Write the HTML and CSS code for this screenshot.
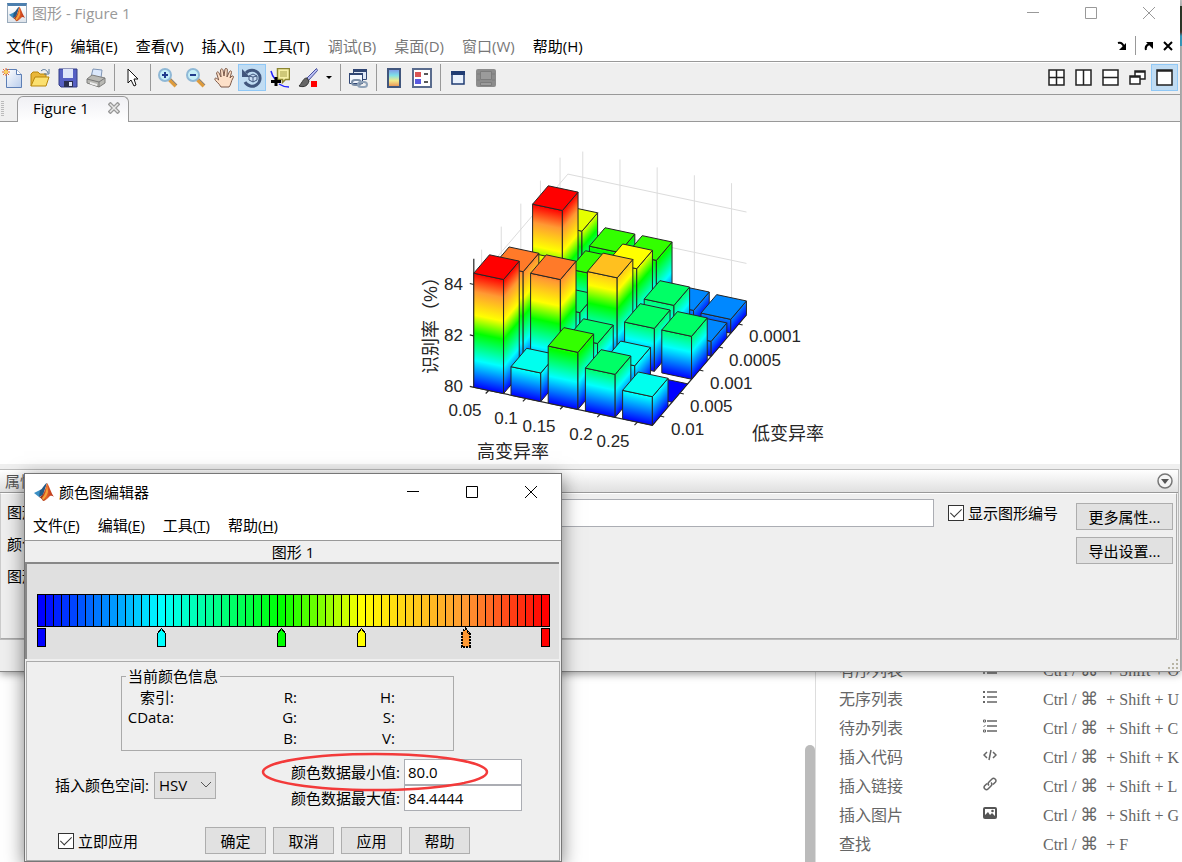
FILE: index.html
```html
<!DOCTYPE html>
<html lang="zh-CN">
<head>
<meta charset="utf-8">
<title>图形 - Figure 1</title>
<link rel="stylesheet" href="styles.css">
</head>
<body>
<svg class="defs" aria-hidden="true">
  <defs>
    <linearGradient id="steel" x1="0" y1="0" x2="1" y2="1"><stop offset="0" stop-color="#fff"/><stop offset="1" stop-color="#b9cdec"/></linearGradient>
    <linearGradient id="flame" x1="0" y1="0" x2="1" y2="0"><stop offset="0" stop-color="#7a1f10"/><stop offset=".5" stop-color="#e4622a"/><stop offset="1" stop-color="#b02a14"/></linearGradient>
    <linearGradient id="jet" x1="0" y1="0" x2="0" y2="1"><stop offset="0" stop-color="#7f8fe8"/><stop offset=".35" stop-color="#7fe0e8"/><stop offset=".65" stop-color="#f2e98a"/><stop offset="1" stop-color="#e88a50"/></linearGradient>
    <symbol id="matlab" viewBox="0 0 20 20">
      <path d="M0 11l6-3 3 3-4 4z" fill="#3b8fc4"/><path d="M6 8c3-1 4-6 7-7l-4 12-4 2z" fill="#245a86"/>
      <path d="M13 1c2 2 4 10 7 14-3-2-4-1-5 0-2 2-4 4-6 4-1-2-2-3-4-4 4 0 6-7 8-14z" fill="url(#flame)"/><path d="M13 2c0 6-2 11-5 14l1 2c2-1 4-5 5-8z" fill="#f6a23a"/>
    </symbol>
  </defs>
</svg>

<main class="notes">
  <div class="editor"></div>
  <div class="scroll"><div class="thumb"></div></div>
  <aside class="help">
    <table>
      <tr><td>有序列表</td><td><svg width="14" height="14" viewBox="0 0 14 14"><path d="M4 2h10M4 7h10M4 12h10M1 1v2M1 6v2M1 11v2" class="ln"/></svg></td><td>Ctrl / <span class="cmd">⌘</span> + Shift + O</td></tr>
      <tr><td>无序列表</td><td><svg width="14" height="14" viewBox="0 0 14 14"><path d="M4 2h10M4 7h10M4 12h10" class="ln"/><path d="M0 1h2v2H0zM0 6h2v2H0zM0 11h2v2H0z" fill="#666"/></svg></td><td>Ctrl / <span class="cmd">⌘</span> + Shift + U</td></tr>
      <tr><td>待办列表</td><td><svg width="14" height="14" viewBox="0 0 14 14"><path d="M4 2h10M4 7h10M4 12h10" class="ln"/><path d="M.5 1h2v2h-2zM.5 11h2v2h-2zM.5 8l2-2" class="ln thin"/></svg></td><td>Ctrl / <span class="cmd">⌘</span> + Shift + C</td></tr>
      <tr><td>插入代码</td><td><svg width="14" height="14" viewBox="0 0 14 14"><path d="M4 4L1 7l3 3M10 4l3 3-3 3M8 2L6 12" class="ln"/></svg></td><td>Ctrl / <span class="cmd">⌘</span> + Shift + K</td></tr>
      <tr><td>插入链接</td><td><svg width="14" height="14" viewBox="0 0 14 14"><path d="M6 8.500C4.500 7 5 6 6 5l3-3c2-2 5 1 3.500 3L10 7.500M8 5.500c1.500 1.500 1 2.500 0 3.500l-3 3c-2 2-5-1-3.500-3L4 6.500" class="ln"/></svg></td><td>Ctrl / <span class="cmd">⌘</span> + Shift + L</td></tr>
      <tr><td>插入图片</td><td><svg width="14" height="14" viewBox="0 0 14 14"><rect y="1" width="14" height="12" rx="2" fill="#555"/><path d="M2 3h10v7l-3-3-2 2-2-3-3 3z" fill="#fff"/><circle cx="9.500" cy="5" r="1.300" fill="#555"/></svg></td><td>Ctrl / <span class="cmd">⌘</span> + Shift + G</td></tr>
      <tr><td>查找</td><td></td><td>Ctrl / <span class="cmd">⌘</span> + F</td></tr>
    </table>
  </aside>
</main>
<div class="edge"><div class="edge-photo"></div></div>

<section class="figure-window">
  <header class="titlebar">
    <span class="app-icon"><svg width="16" height="16"><use href="#matlab"/></svg></span>
    <h1>图形 - Figure 1</h1>
    <div class="winbtns">
      <button aria-label="最小化"><svg width="12" height="12"><path d="M0 5.500h12" /></svg></button>
      <button aria-label="最大化"><svg width="12" height="12"><path d="M.5.5h11v11H.5z"/></svg></button>
      <button aria-label="关闭"><svg width="12" height="12"><path d="M0 0l12 12M12 0L0 12"/></svg></button>
    </div>
  </header>
  <nav class="menubar">
    <button>文件(F)</button><button>编辑(E)</button><button>查看(V)</button><button>插入(I)</button><button>工具(T)</button><button disabled>调试(B)</button><button disabled>桌面(D)</button><button disabled>窗口(W)</button><button>帮助(H)</button>
    <div class="dockbtns">
      <button aria-label="停靠"><svg width="10" height="10"><path d="M1 2c3-1 5 1 6 4" fill="none" stroke="#000" stroke-width="2"/><path d="M9 2v7H2z"/></svg></button>
      <i></i>
      <button aria-label="取消停靠"><svg width="10" height="10"><path d="M2 9c-1-3 1-5 3-6" fill="none" stroke="#000" stroke-width="2"/><path d="M2 1h7v7z"/></svg></button>
      <button aria-label="关闭图形"><svg width="10" height="10"><path d="M1 1l8 8M9 1L1 9" fill="none" stroke="#000" stroke-width="2"/></svg></button>
    </div>
  </nav>
  <div class="toolbar">
    <div class="tools">
      <button aria-label="新建"><svg width="20" height="20"><path d="M4.500 1.500h10l5 5v13h-15z" fill="url(#steel)" stroke="#5d7fb5"/><path d="M14.500 1.500v5h5" fill="#fff" stroke="#5d7fb5"/><path d="M4 0v8M0 4h8M1 1l6 6M7 1L1 7" stroke="#e2662f"/><circle cx="4" cy="4" r="2" fill="#fbd35a"/></svg></button>
      <button aria-label="打开"><svg width="20" height="20"><path d="M1 18V6l2-2h5l2 2h6v3" fill="#e9b73a" stroke="#b8860b"/><path d="M1 18L5 9h14l-3 9z" fill="#fbe070" stroke="#b8860b"/><path d="M11 3c3-3 6-1 7 2M19 1v5h-5" fill="none" stroke="#5c7a9a"/></svg></button>
      <button aria-label="保存"><svg width="20" height="20"><path d="M1 1h18v18H3l-2-2z" fill="#5660c4" stroke="#333c86"/><path d="M5 1h10v9H5z" fill="#dfe6fa"/><path d="M6 13h9v6H6z" fill="#2b2f4e"/><path d="M11 14h3v4h-3z" fill="#dfe6fa"/></svg></button>
      <button aria-label="打印"><svg width="20" height="20"><path d="M5 9l2-8 9 1-1 8z" fill="#dbe8fb" stroke="#7f95b5"/><path d="M1 11l5-4 13 3v5l-6 4-12-4z" fill="#b9b9b4" stroke="#7f7f7d"/><path d="M1 11l12 3 6-4M13 14v5" fill="none" stroke="#777"/><path d="M4 14l7 2v2l-7-2z" fill="#eee"/></svg></button>
      <i></i>
      <button aria-label="选择"><svg width="20" height="20"><path d="M6 1v14l3-3 3 6 2-1-2-6h4z" fill="#fff" stroke="#111"/></svg></button>
      <i></i>
      <button aria-label="放大"><svg width="20" height="20"><path d="M11 11l7 7" stroke="#dd9b3c" stroke-width="4"/><path d="M12 10l7 7" stroke="#7f838e"/><circle cx="7" cy="7" r="6" fill="#c5eef7" stroke="#8fb8d6" stroke-width="2"/><path d="M4 7h6M7 4v6" stroke="#203b8c" stroke-width="2"/></svg></button>
      <button aria-label="缩小"><svg width="20" height="20"><path d="M11 11l7 7" stroke="#dd9b3c" stroke-width="4"/><path d="M12 10l7 7" stroke="#7f838e"/><circle cx="7" cy="7" r="6" fill="#c5eef7" stroke="#8fb8d6" stroke-width="2"/><path d="M4 7h6" stroke="#203b8c" stroke-width="2"/></svg></button>
      <button aria-label="平移"><svg width="20" height="20"><path d="M7 19C5 15 1 13 .7 11c.5-2 3 0 4 1L2.500 5c1-2 2-1 2.500 0l2 4L6.500 2c1-2 2-1 2.500 0l1 6 1-7c1-1.500 2.500-.5 2.300 1L13 9l2.500-5.500c1-1.500 2.500 0 2 1L16 10l2-2c1.500-.5 2 1 1 2-2 3-2 7-4 9z" fill="#fde0c8" stroke="#7c5948"/></svg></button>
      <button class="on" aria-label="三维旋转"><svg width="20" height="20"><path d="M4 5a8 8 0 1 1-1 9" fill="none" stroke="#41567d" stroke-width="3"/><path d="M0 1v8h8z" fill="#41567d"/><path d="M7 8l4-2 4 2v4l-4 2-4-2zM7 8l4 1 4-1M11 9v5" fill="#c9dcf3" stroke="#41567d"/></svg></button>
      <button aria-label="数据游标"><svg width="20" height="20"><path d="M1 3c1 4 2 6 4 8M9 16c3 2 6 3 10 3" fill="none" stroke="#22f" stroke-width="1.500"/><path d="M7.500.5h12v11h-4l-3 3v-3h-5z" fill="#f6f0a6" stroke="#8b8532" stroke-width="1.500"/><path d="M10 4h7M10 6h7M10 8h7" stroke="#a59f4b"/><path d="M6 9v9M1 13.500h10" stroke="#000" stroke-width="3"/></svg></button>
      <button aria-label="刷亮"><svg width="20" height="20"><path d="M18.500.5l1 2-9 10-2-2z" fill="#b9bff2" stroke="#474f9d"/><path d="M9 10c-4 0-4 4-8 8 6 2 9-1 10-5z" fill="#666" stroke="#333"/><path d="M13 13h6v6h-6z" fill="#f00"/></svg></button>
      <button class="drop" aria-label="刷亮选项"><svg width="6" height="3"><path d="M0 0h6L3 3z"/></svg></button>
      <i></i>
      <button aria-label="链接绘图"><svg width="20" height="20"><path d="M5.500 1.500h13v10h-13z" fill="#dfe8f7" stroke="#304674"/><path d="M5 1h14v3H5z" fill="#304674"/><path d="M1.500 5.500h13v10h-13z" fill="#f3f7fe" stroke="#304674"/><path d="M1 5h14v2H1z" fill="#304674"/><rect x="4" y="12" width="9" height="5" rx="3" fill="none" stroke="#7b8ea6" stroke-width="2"/><rect x="10" y="14" width="9" height="5" rx="3" fill="none" stroke="#8fa2b8" stroke-width="2"/></svg></button>
      <i></i>
      <button aria-label="颜色栏"><svg width="20" height="20"><path d="M4 1h12v18H4z" fill="url(#jet)" stroke="#41567d" stroke-width="2"/></svg></button>
      <button aria-label="图例"><svg width="20" height="20"><path d="M1 1h18v18H1z" fill="#fff" stroke="#5a6c8e" stroke-width="2"/><path d="M3 4h6v5H3z" fill="#d95454"/><path d="M3 11h6v5H3z" fill="#5a5ae0"/><path d="M12 6h4M12 14h4" stroke="#222" stroke-width="1.500"/></svg></button>
      <i></i>
      <button aria-label="隐藏绘图工具"><svg width="14" height="14"><path d="M1 1h12v12H1z" fill="#e9f1fc" stroke="#203c73" stroke-width="1.500"/><path d="M0 0h14v4H0z" fill="#203c73"/></svg></button>
      <button aria-label="显示绘图工具" disabled><svg width="20" height="20"><rect x="0" y="1" width="20" height="18" rx="2" fill="#8c8c8c"/><path d="M4.500 3.500h11v8h-11zM4.500 14.500h11v3h-11zM1 6h3M16 6h3M1 12h3M16 12h3" fill="#9b9b9b" stroke="#7c7c7c"/></svg></button>
    </div>
    <div class="layouts">
      <button aria-label="平铺"><svg width="17" height="17"><path d="M1 1h15v15H1zM8.500 1v15M1 8.500h15"/></svg></button>
      <button aria-label="左右平铺"><svg width="17" height="17"><path d="M1 1h15v15H1zM8.500 1v15"/></svg></button>
      <button aria-label="上下平铺"><svg width="17" height="17"><path d="M1 1h15v15H1zM1 8.500h15"/></svg></button>
      <button aria-label="浮动"><svg width="17" height="17"><path d="M6 2h10v8H6zM6 3h10"/><path d="M1 7h10v8H1zM1 8h10"/></svg></button>
      <button class="on" aria-label="最大化"><svg width="17" height="17"><path d="M1 1h15v15H1zM1 2h15"/></svg></button>
    </div>
  </div>
  <div class="tabs">
    <span class="grip"></span>
    <div class="tab"><span>Figure 1</span><button aria-label="关闭标签"><svg width="12" height="12"><path d="M1 1l10 10M11 1L1 11" stroke="#999" stroke-width="4"/><path d="M2 2l8 8M10 2l-8 8" stroke="#e8e8e8" stroke-width="1.500"/></svg></button></div>
    <span class="tabfill"></span>
  </div>
  <svg id="plot" class="plot" viewBox="0 122 1180 342" role="img" aria-label="识别率三维柱状图">
    <defs><linearGradient id="cmap" gradientUnits="userSpaceOnUse" x1="0" y1="0" x2="0" y2="-114"></linearGradient></defs>
  </svg>
  <section class="props">
    <header><h2>属性</h2><button aria-label="折叠"><svg width="16" height="16"><circle cx="8" cy="8" r="7" fill="#f5f5f5" stroke="#777" stroke-width="1.500"/><path d="M4 6h8l-4 5z" fill="#555"/></svg></button></header>
    <div class="prop-body">
      <div class="prop-fields">
        <div class="prop-row"><label class="cut" for="fname">图形</label><input id="fname" type="text"><label class="check"><input type="checkbox" checked>显示图形编号</label></div>
        <div class="prop-row"><span class="cut">颜色</span></div>
        <div class="prop-row"><span class="cut">图形</span></div>
      </div>
      <div class="prop-buttons"><button class="push">更多属性...</button><button class="push">导出设置...</button></div>
    </div>
  </section>
  <footer class="status"><svg width="12" height="12"><path d="M9 0h2v2H9zM5 4h2v2H5zM9 4h2v2H9zM1 8h2v2H1zM5 8h2v2H5zM9 8h2v2H9z" fill="#b8b4a4"/></svg></footer>
</section>

<section class="dialog">
  <header class="titlebar">
    <svg width="20" height="20"><use href="#matlab"/></svg>
    <h1>颜色图编辑器</h1>
    <div class="winbtns">
      <button aria-label="最小化"><svg width="12" height="12"><path d="M0 5.500h12"/></svg></button>
      <button aria-label="最大化"><svg width="12" height="12"><path d="M.5.5h11v11H.5z"/></svg></button>
      <button aria-label="关闭"><svg width="12" height="12"><path d="M0 0l12 12M12 0L0 12"/></svg></button>
    </div>
  </header>
  <nav class="menubar"><button>文件(<u>F</u>)</button><button>编辑(<u>E</u>)</button><button>工具(<u>T</u>)</button><button>帮助(<u>H</u>)</button></nav>
  <div class="caption">图形 1</div>
  <div class="mapbox"><svg id="bar" viewBox="0 0 514 56" shape-rendering="crispEdges"></svg></div>
  <div class="settings">
    <fieldset class="info">
      <legend>当前颜色信息</legend>
      <span>索引:</span><span>R:</span><span>H:</span>
      <span>CData:</span><span>G:</span><span>S:</span>
      <span></span><span>B:</span><span>V:</span>
    </fieldset>
    <div class="ranges">
      <div class="space"><label for="space">插入颜色空间:</label><span class="selwrap"><select id="space"><option>HSV</option></select><svg width="10" height="6"><path d="M0 0l5 5 5-5" fill="none" stroke="#555"/></svg></span></div>
      <div class="limits">
        <label for="cmin">颜色数据最小值:</label><input id="cmin" type="text" value="80.0">
        <label for="cmax">颜色数据最大值:</label><input id="cmax" type="text" value="84.4444">
        <svg class="ring" width="228" height="40"><ellipse cx="114" cy="20" rx="112" ry="18"/></svg>
      </div>
    </div>
    <div class="actions">
      <label class="check"><input type="checkbox" checked>立即应用</label>
      <div class="pushes"><button class="push">确定</button><button class="push">取消</button><button class="push">应用</button><button class="push">帮助</button></div>
    </div>
  </div>
</section>
<script src="chart.js"></script>
</body>
</html>
```

FILE: styles.css
```css
* { box-sizing: border-box; }
body {
  margin: 0; height: 100vh; overflow: hidden; position: relative; background: #fff; color: #000;
  font: 15px/20px "Open Sans", "Noto Sans CJK SC", sans-serif;
}
button, input, select { font: inherit; color: inherit; }
button { padding: 0; border: 0; background: none; }
h1, h2 { margin: 0; font: inherit; }
.defs { position: absolute; width: 0; height: 0; }

.notes { display: grid; grid-template-columns: 1fr 10px 367px; height: 100%; }
.scroll { padding-top: 745px; height: 100%; overflow: hidden; }
.thumb { height: 100%; background: #bbb; border-radius: 5px 5px 0 0; }
.help { border-left: 1px solid #ddd; padding: 656px 0 0 23px; overflow: hidden; color: #666; font: 16px/29px "Liberation Serif", "Noto Sans CJK SC", serif; }
.help table { border-collapse: collapse; white-space: nowrap; }
.help tr { height: 29px; }
.help td { padding: 0; height: 29px; }
.help td:first-child { width: 144px; }
.help td:nth-child(2) { width: 60px; line-height: 0; padding-bottom: 6px; }
.help .ln { fill: none; stroke: #666; stroke-width: 1.5; }
.help .thin { stroke-width: 1; }
.cmd { font-family: "DejaVu Sans", sans-serif; font-size: 18px; line-height: 20px; margin-right: 4px; }
.edge { position: absolute; top: 0; right: 0; width: 2px; height: 671px; background: #c8c8c8; }
.edge-photo { margin-top: 6px; height: 40px; background: linear-gradient(#33402f 60%, #5b3a2d 65%, #3fb0d8 75%); }

.figure-window { position: absolute; top: 0; left: 0; right: 2px; background: #efefef; border-bottom: 1px solid #888; box-shadow: 0 2px 8px rgba(0,0,0,.4); }
.titlebar { display: flex; align-items: center; background: #fff; }
.winbtns { margin-left: auto; display: flex; }
.winbtns button { display: grid; place-items: center; }
.winbtns path { fill: none; stroke: currentColor; }
.figure-window .titlebar { height: 30px; padding: 0 2px 4px 7px; gap: 5px; color: #999; }
.figure-window .winbtns button { width: 58px; }
.app-icon { display: grid; place-items: center; width: 20px; height: 20px; border: 1px solid #9ab; border-top: 3px solid #4c7fae; background: linear-gradient(#fff, #dde3ea); }
.menubar { display: flex; align-items: center; gap: 18px; background: #fff; white-space: nowrap; }
.figure-window .menubar { height: 32px; padding: 0 6px; border-bottom: 1px solid #999; }
.menubar button:disabled { color: #777; }
.dockbtns { margin-left: auto; display: flex; align-items: center; gap: 7px; }
.dockbtns button { height: 20px; display: grid; place-items: center; width: 12px; }
.dockbtns i { width: 1px; height: 19px; background: #999; }
.toolbar { display: flex; justify-content: space-between; height: 33px; padding-top: 1px; border-top: 1px solid #fff; border-bottom: 1px solid #999; }
.tools, .layouts { display: flex; height: 27px; }
.tools { margin-left: -2px; }
.tools button { width: 28px; display: grid; place-items: center; }
.tools .drop { width: 14px; }
.tools i { width: 8px; background: linear-gradient(#999, #999) center / 1px 100% no-repeat; }
.layouts { padding-right: 2px; }
.layouts button { width: 27px; display: grid; place-items: center; }
.layouts path { fill: #fff; stroke: #222; stroke-width: 1.5; }
.toolbar .on { background: #c0dcf3; border: 1px solid #90c8f6; }
.tabs { display: flex; height: 27px; }
.tabs .grip { width: 17px; border-bottom: 1px solid #999; background: repeating-linear-gradient(#bbb 0 1px, transparent 1px 2px) 1px 6px / 3px 16px no-repeat; }
.tab { display: flex; align-items: center; gap: 19px; width: 112px; margin-top: 1px; padding: 0 8px 3px 15px; border: 1px solid #999; border-bottom: 0; border-radius: 6px 6px 0 0; background: linear-gradient(#f0f0f4, #fff); white-space: nowrap; }
.tab button { line-height: 0; }
.tabfill { flex: 1; border-bottom: 1px solid #999; }
.plot { display: block; width: 100%; background: #fff; }
.plot text { font: 17px "Liberation Sans", "Noto Sans CJK SC", sans-serif; fill: #262626; }
.plot .axis { font-size: 18px; }
.plot .grid { fill: none; stroke: #dcdcdc; }
.plot .rule { fill: none; stroke: #262626; stroke-width: 1.2; }
.plot .face { stroke: #262626; stroke-width: 1; stroke-linejoin: round; vector-effect: non-scaling-stroke; }
.plot .side { fill: url(#cmap); }

.props { margin: 5px 1px 0 0; border: 1px solid #bbb; border-left: 0; }
.props header { display: flex; justify-content: space-between; align-items: center; height: 23px; padding: 0 5px; background: linear-gradient(#fff, #e0e0e0); border-bottom: 1px solid #999; color: #555; }
.props header h2 { width: 20px; overflow: hidden; white-space: nowrap; }
.props header button { line-height: 0; }
.prop-body { display: flex; height: 146px; margin-right: 1px; padding: 5px 3px 0 6px; border: 1px solid #aaa; border-top-color: #fff; border-left-color: #ccc; }
.prop-fields { flex: 1; display: grid; grid-template-rows: 28px 36px 28px; align-content: start; }
.prop-row { display: flex; align-items: center; }
.prop-row .cut { width: 18px; margin: 0 62px 2px 0; overflow: hidden; white-space: nowrap; }
.prop-row > input { flex: 1; height: 28px; border: 1px solid #abadb3; background: #fff; margin-right: 14px; }
.check { display: flex; align-items: center; gap: 4px; white-space: nowrap; }
.check input { appearance: none; width: 16px; height: 16px; margin: 0; border: 1px solid #333; background: #fff; display: grid; place-items: center; }
.check input:checked::after { content: ""; width: 5px; height: 10px; margin-bottom: 3px; border: solid #333; border-width: 0 1px 1px 0; transform: rotate(45deg); }
.push { height: 27px; background: #e1e1e1; border: 1px solid #adadad; }
.prop-buttons { display: grid; align-content: start; gap: 7px; margin: 4px 0 0 18px; }
.prop-buttons .push { width: 97px; }
.status { display: flex; justify-content: flex-end; align-items: flex-end; height: 31px; padding: 0 1px; }

.dialog { position: absolute; left: 24px; top: 473px; width: 538px; background: #efefef; border: 1px solid #777; box-shadow: 0 5px 18px rgba(0,0,0,.5); }
.dialog .titlebar { height: 36px; padding: 0 1px 0 9px; gap: 5px; }
.dialog .winbtns button { width: 59px; }
.dialog .menubar { height: 31px; padding: 0 8px 1px; border-bottom: 1px solid #999; }
.caption { height: 21px; text-align: center; line-height: 22px; }
.mapbox { background: #e0e0e0; border: 2px solid #888; border-width: 2px 0 0 2px; margin-right: 2px; padding: 30px 8px 9px 10px; }
.mapbox svg { display: block; width: 100%; }
.settings { margin: 2px 1px 0; padding: 5px 0; border: 1px solid #aaa; height: 200px; }
.info { display: grid; grid-template-columns: 48px 123px 98px; justify-items: end; width: 333px; height: 84px; margin: 0 0 0 94px; padding: 2px 4px; border: 1px solid #aaa; white-space: nowrap; }
.info legend { padding: 0 2px; line-height: 18px; }
.info span { line-height: 20px; height: 20px; }
.ranges { display: flex; align-items: center; margin-top: 8px; padding-left: 28px; }
.space { display: flex; align-items: center; gap: 5px; width: 236px; white-space: nowrap; }
.selwrap { display: flex; align-items: center; }
.selwrap svg { margin-left: -15px; pointer-events: none; }
select { appearance: none; width: 62px; height: 27px; padding: 0 4px; border: 1px solid #adadad; border-radius: 0; background: #e1e1e1; }
.limits { position: relative; display: grid; grid-template-columns: 109px 118px; column-gap: 4px; }
.limits label { text-align: right; line-height: 26px; white-space: nowrap; }
.limits input { width: 100%; height: 26px; padding: 0 3px; border: 1px solid #abadb3; background: #fff; }
.ring { position: absolute; left: -30px; top: -7px; }
.ring ellipse { fill: none; stroke: #f33a3a; stroke-width: 2.5; }
.actions { display: flex; align-items: center; margin-top: 16px; padding-left: 31px; }
.actions .check { width: 147px; }
.pushes { display: flex; gap: 7px; }
.pushes .push { width: 61px; }
```

FILE: chart.js
```js
// Colour map: 64 entries interpolated between the editor's node pointers.
const nodes = [[0, [0, 0, 255]], [15, [0, 255, 255]], [30, [0, 255, 0]], [40, [255, 255, 0]], [53, [255, 153, 51]], [63, [255, 0, 0]]];
function mapColor(i) {
  i = Math.max(0, Math.min(63, i));
  let k = 1;
  while (nodes[k][0] < i) k++;
  const [a, ca] = nodes[k - 1], [b, cb] = nodes[k], t = (i - a) / (b - a);
  return 'rgb(' + ca.map((v, n) => Math.round(v + (cb[n] - v) * t)).join(',') + ')';
}
function add(parent, tag, attrs, text) {
  const e = document.createElementNS('http://www.w3.org/2000/svg', tag);
  for (const k in attrs) e.setAttribute(k, attrs[k]);
  if (text) e.textContent = text;
  parent.appendChild(e);
  return e;
}

// 3-D bar chart: x, y and z unit vectors of the axes in screen space.
const plot = document.getElementById('plot'), cmap = document.getElementById('cmap');
nodes.forEach(([i]) => add(cmap, 'stop', { offset: i / 63, 'stop-color': mapColor(i) }));
const O = [473.8, 387.3], X = [37.2, 7.9], Y = [19.6, -23], Z = 25.7;
const P = (x, y, z) => [O[0] + x * X[0] + y * Y[0], O[1] + x * X[1] + y * Y[1] - z * Z];
const line = (cls, ...pts) => add(plot, 'polyline', { class: cls, points: pts.map(p => p.join()).join(' ') });

for (let k = 0; k < 5; k++) {
  line('grid', P(0, k + .4, 0), P(0, k + .4, 5));
  line('grid', P(k + .4, 4.8, 0), P(k + .4, 4.8, 5));
}
[0, 2, 4].forEach(z => line('grid', P(0, 0, z), P(0, 4.8, z), P(4.8, 4.8, z)));
line('rule', P(0, 0, 5), P(0, 0, 0), P(4.8, 0, 0), P(4.8, 4.8, 0));

const data = [
  [4.44, 1.11, 2.22, 1.67, 1.11],
  [3.85, 3.85, 1.67, 1.11, 0],
  [2.74, 1.67, 3.33, 1.67, 1.67],
  [4.44, 2.22, 2.79, 1.67, .58],
  [2.74, 2.22, 2.22, .58, .54]
];
const W = .8;
for (let r = 4; r >= 0; r--) for (let c = 0; c < 5; c++) {
  const h = data[r][c], hp = h * Z, a = P(c, r, 0), b = P(c + W, r, 0);
  if (h) {
    const front = { class: 'face side', x: 0, y: -hp, width: X[0] * W, height: hp };
    add(plot, 'rect', { ...front, transform: `matrix(1 ${X[1] / X[0]} 0 1 ${a})` });
    add(plot, 'rect', { ...front, width: Y[0] * W, transform: `matrix(1 ${Y[1] / Y[0]} 0 1 ${b})` });
  }
  add(plot, 'polygon', {
    class: 'face', fill: mapColor(Math.round(h / 4.4444 * 64)),
    points: [P(c, r, h), P(c + W, r, h), P(c + W, r + W, h), P(c, r + W, h)].map(p => p.join()).join(' ')
  });
}

for (let k = 0; k < 5; k++) {
  const p = P(k + .4, 0, 0), q = P(4.8, k + .4, 0);
  line('rule', p, [p[0] - 3, p[1] + 3]);
  line('rule', q, [q[0] + 4, q[1] + 1]);
}
[[465, 416, '0.05'], [506, 424, '0.1'], [539, 432, '0.15'], [581, 440, '0.2'], [613, 447, '0.25']]
  .forEach(([x, y, t]) => add(plot, 'text', { x, y, 'text-anchor': 'middle' }, t));
[[671, 435, '0.01'], [690, 412, '0.005'], [710, 389, '0.001'], [729, 366, '0.0005'], [749, 342, '0.0001']]
  .forEach(([x, y, t]) => add(plot, 'text', { x, y }, t));
[0, 2, 4].forEach(z => {
  const p = P(0, 0, z);
  line('rule', p, [p[0] - 4, p[1] - 1]);
  add(plot, 'text', { x: 463, y: p[1] + 5, 'text-anchor': 'end' }, String(80 + z));
});
add(plot, 'text', { class: 'axis', x: 477, y: 458 }, '高变异率');
add(plot, 'text', { class: 'axis', x: 752, y: 440 }, '低变异率');
add(plot, 'text', { class: 'axis', transform: 'translate(437 374) rotate(-90)' }, '识别率（%）');

// Colour map editor strip with its node pointers.
const bar = document.getElementById('bar');
for (let i = 0; i < 64; i++) add(bar, 'rect', { x: i * 8 + .5, y: .5, width: 8, height: 32, fill: mapColor(i), stroke: '#000' });
nodes.forEach(([i]) => {
  const x = i * 8 + .5, end = i === 0 || i === 63;
  add(bar, 'path', {
    d: end ? `M${x} 34.500h8v18h-8z` : `M${x} 39.500l4-5 4 5v13h-8z`, fill: mapColor(i), stroke: '#000',
    ...(i === 53 ? { 'stroke-width': 2, 'stroke-dasharray': '2 1' } : {})
  });
});
```
